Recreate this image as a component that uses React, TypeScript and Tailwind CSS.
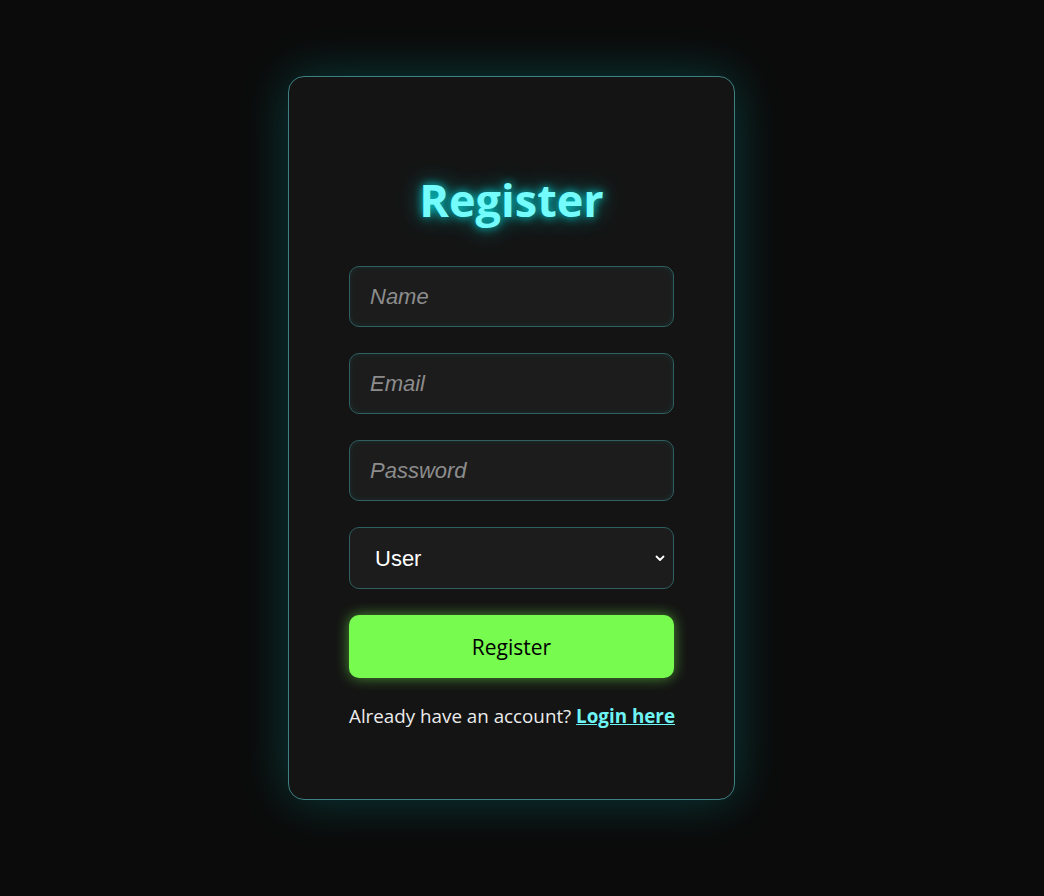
import { useState } from 'react'

const fields = [
  { name: 'name', type: 'text', placeholder: 'Name' },
  { name: 'email', type: 'email', placeholder: 'Email' },
  { name: 'password', type: 'password', placeholder: 'Password' },
]

export default function App() {
  const [role, setRole] = useState('user')

  return (
    <div
      className="min-h-screen bg-[#0b0b0b] flex justify-center pt-[76px] pr-[21px]"
      style={{ fontFamily: '"Open Sans", "Noto Sans", sans-serif' }}
    >
      <div className="w-[447px] h-[724px] bg-[#141414] border border-[#3e7f80] rounded-2xl px-[60px] pt-[98px] shadow-[0_0_50px_rgba(0,255,255,0.2)]">
        {/* Title */}
        <h2 className="text-center text-[45px] leading-[50px] font-bold text-[#74fbfc] [text-shadow:0_0_10px_rgba(0,255,255,0.8),0_0_24px_rgba(0,255,255,0.45)]">
          Register
        </h2>

        <form className="mt-[41px] flex flex-col gap-[26px]" onSubmit={(e) => e.preventDefault()}>
          {fields.map((f) => (
            <input
              key={f.name}
              type={f.type}
              placeholder={f.placeholder}
              className="h-[61px] w-full rounded-[10px] bg-[#1c1c1c] border border-[#2f5f60] px-5 text-[22px] text-white outline-none placeholder:italic placeholder:text-[#8c8c8c] shadow-[inset_0_0_6px_rgba(0,255,255,0.08)]"
              style={{ fontFamily: '"Liberation Sans", Arial, sans-serif' }}
            />
          ))}

          <div className="relative">
            <select
              value={role}
              onChange={(e) => setRole(e.target.value)}
              className="appearance-none h-[62px] w-full rounded-[10px] bg-[#1c1c1c] border border-[#2f5f60] pl-[25px] pr-10 text-[22px] text-white outline-none"
              style={{ fontFamily: '"Liberation Sans", Arial, sans-serif' }}
            >
              <option value="user">User</option>
              <option value="admin">Admin</option>
            </select>
            <svg
              className="absolute right-[8px] top-1/2 -translate-y-1/2 pointer-events-none"
              width="12"
              height="12"
              viewBox="0 0 12 12"
              fill="none"
            >
              <path d="M2.5 4.5 L6 8 L9.5 4.5" stroke="#fff" strokeWidth="1.8" strokeLinecap="round" strokeLinejoin="round" />
            </svg>
          </div>

          <button
            type="submit"
            className="h-[63px] w-full rounded-[10px] bg-[#77fb4f] text-black text-[21px] pt-[3px] shadow-[0_0_14px_rgba(119,251,79,0.55)]"
          >
            Register
          </button>
        </form>

        <p className="mt-[24px] text-center text-[18.8px] text-[#ececec] whitespace-nowrap">
          Already have an account?{' '}
          <a href="#" className="font-bold text-[#6ff4f6] underline">
            Login here
          </a>
        </p>
      </div>
    </div>
  )
}
